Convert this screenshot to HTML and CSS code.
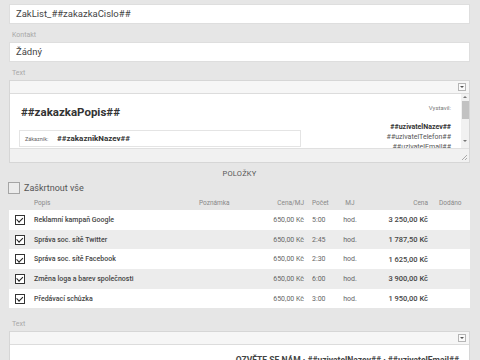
FILE: index.html
```html
<!DOCTYPE html>
<html lang="cs">
<head>
<meta charset="utf-8">
<link rel="stylesheet" href="styles.css">
</head>
<body>
<div class="page">
  <div class="field first">
    <div class="label">Název souboru</div>
    <div class="input">ZakList_##zakazkaCislo##</div>
  </div>
  <div class="field">
    <div class="label">Kontakt</div>
    <div class="input">Žádný</div>
  </div>
  <div class="field">
    <div class="label">Text</div>
    <div class="editor">
      <div class="toolbar"><span class="tbtn"></span></div>
      <div class="econtent">
        <div class="doc">
          <div class="doc-left">
            <div class="doc-title">##zakazkaPopis##</div>
            <div class="custbox"><span class="custlabel">Zákazník:</span><span class="custname">##zakaznikNazev##</span></div>
          </div>
          <div class="doc-right">
            <div class="vyst">Vystavil:</div>
            <div class="uname">##uzivatelNazev##</div>
            <div class="uline">##uzivatelTelefon##</div>
            <div class="uline">##uzivatelEmail##</div>
          </div>
        </div>
        <div class="scrollbar">
          <span class="arr up"></span>
          <span class="thumb"></span>
          <span class="arr down"></span>
        </div>
      </div>
      <div class="statusbar"><span class="grip"></span></div>
    </div>
  </div>

  <div class="section-title">POLOŽKY</div>
  <label class="checkall"><span class="cbox"></span><span>Zaškrtnout vše</span></label>

  <div class="table">
    <div class="row head">
      <div></div><div>Popis</div><div>Poznámka</div><div class="r">Cena/MJ</div><div class="pl">Počet</div><div class="c">MJ</div><div class="r">Cena</div><div class="dl">Dodáno</div>
    </div>
    <div class="row item">
      <div><span class="chk"></span></div><div class="name">Reklamní kampaň Google</div><div></div><div class="r">650,00 Kč</div><div class="pl">5:00</div><div class="c">hod.</div><div class="r sum">3 250,00 Kč</div><div></div>
    </div>
    <div class="row item">
      <div><span class="chk"></span></div><div class="name">Správa soc. sítě Twitter</div><div></div><div class="r">650,00 Kč</div><div class="pl">2:45</div><div class="c">hod.</div><div class="r sum">1 787,50 Kč</div><div></div>
    </div>
    <div class="row item">
      <div><span class="chk"></span></div><div class="name">Správa soc. sítě Facebook</div><div></div><div class="r">650,00 Kč</div><div class="pl">2:30</div><div class="c">hod.</div><div class="r sum">1 625,00 Kč</div><div></div>
    </div>
    <div class="row item">
      <div><span class="chk"></span></div><div class="name">Změna loga a barev společnosti</div><div></div><div class="r">650,00 Kč</div><div class="pl">6:00</div><div class="c">hod.</div><div class="r sum">3 900,00 Kč</div><div></div>
    </div>
    <div class="row item">
      <div><span class="chk"></span></div><div class="name">Předávací schůzka</div><div></div><div class="r">650,00 Kč</div><div class="pl">3:00</div><div class="c">hod.</div><div class="r sum">1 950,00 Kč</div><div></div>
    </div>
  </div>

  <div class="field last">
    <div class="label">Text</div>
    <div class="editor">
      <div class="toolbar"><span class="tbtn"></span></div>
      <div class="econtent2">
        <div class="foot">OZVĚTE SE NÁM · ##uzivatelNazev## · ##uzivatelEmail##</div>
      </div>
    </div>
  </div>
</div>
</body>
</html>
```

FILE: styles.css
```css
* { box-sizing: border-box; }
html, body { margin: 0; padding: 0; }
body {
  background: #e6e6e6;
  font-family: Roboto, "Liberation Sans", Arial, sans-serif;
  color: #444;
  width: 480px;
  height: 360px;
  overflow: hidden;
}
.page {
  padding: 0 10px 0 9px;
  margin-top: -7px;
}
.field { padding-top: 7px; }
.field.first { padding-top: 0; }
.label {
  font-size: 7px;
  line-height: 9px;
  color: #a8a8a8;
  padding-left: 3px;
  margin-bottom: 2px;
}
.input {
  height: 20px;
  background: #fff;
  border: 1px solid #dedede;
  font-size: 9.5px;
  line-height: 18px;
  padding-left: 6px;
  color: #444;
}
.editor {
  border: 1px solid #d6d6d6;
  background: #fff;
}
.toolbar {
  height: 13px;
  background: #f6f6f6;
  border-bottom: 1px solid #dcdcdc;
  display: flex;
  justify-content: flex-end;
  align-items: center;
  padding-right: 3px;
}
.tbtn {
  width: 8px;
  height: 8px;
  border: 1px solid #b5b5b5;
  background: #fafafa;
  display: flex;
  align-items: center;
  justify-content: center;
}
.tbtn::after {
  content: "";
  width: 0; height: 0;
  border-left: 2px solid transparent;
  border-right: 2px solid transparent;
  border-top: 2px solid #555;
}
.econtent {
  height: 54px;
  display: flex;
  overflow: hidden;
}
.doc {
  flex: 1;
  display: flex;
  justify-content: space-between;
  padding: 0 10px 0 9px;
}
.doc-left { padding-top: 11px; }
.doc-title {
  font-size: 11.5px;
  line-height: 15px;
  font-weight: bold;
  color: #333;
  padding-left: 2px;
}
.custbox {
  margin-top: 10px;
  width: 282px;
  height: 17px;
  border: 1px solid #e4e4e4;
  display: flex;
  align-items: center;
  padding-left: 5px;
}
.custlabel { font-size: 5.5px; color: #666; width: 32px; }
.custname { font-size: 8px; font-weight: bold; color: #333; }
.doc-right {
  text-align: right;
  padding-top: 10px;
}
.vyst { font-size: 6px; color: #777; line-height: 8px; margin-bottom: 10px; }
.uname { font-size: 7px; font-weight: bold; color: #333; line-height: 10px; }
.uline { font-size: 7px; color: #555; line-height: 10px; }
.scrollbar {
  width: 8px;
  background: #f1f1f1;
  display: flex;
  flex-direction: column;
  align-items: center;
  padding-top: 2px;
}
.arr { width: 0; height: 0; border-left: 2px solid transparent; border-right: 2px solid transparent; }
.arr.up { border-bottom: 2px solid #777; }
.arr.down { border-top: 2px solid #777; margin-top: auto; margin-bottom: 6px; }
.thumb { width: 7px; height: 18px; background: #c2c2c2; margin-top: 3px; }
.statusbar {
  height: 14px;
  background: #f1f1f1;
  border-top: 1px solid #e0e0e0;
  display: flex;
  justify-content: flex-end;
  align-items: flex-end;
  padding: 0 2px 2px 0;
}
.grip {
  width: 5px; height: 5px;
  background: linear-gradient(135deg, transparent 45%, #aaa 45%, #aaa 55%, transparent 55%, transparent 75%, #aaa 75%, #aaa 85%, transparent 85%);
}
.section-title {
  text-align: center;
  font-size: 7.5px;
  color: #555;
  line-height: 10px;
  margin-top: 6px;
  letter-spacing: 0.2px;
}
.checkall {
  display: flex;
  align-items: center;
  gap: 4px;
  margin: 3px 0 0 -1px;
  font-size: 9px;
  color: #555;
}
.cbox {
  width: 12px; height: 12px;
  border: 1px solid #a5a5a5;
  background: #ececec;
}
.table { margin-top: 1px; }
.row {
  display: grid;
  grid-template-columns: 25px 165px 70px 35px 34px 24px 66px 43px;
  align-items: center;
}
.row.head {
  height: 15px;
  font-size: 6.5px;
  color: #888;
}
.row.item {
  height: 19.7px;
  font-size: 7px;
  color: #666;
  background: #fff;
}
.row.item:nth-child(odd) { background: #ececec; }
.r { text-align: right; }
.c { text-align: center; }
.pl { padding-left: 8px; }
.dl { padding-left: 11px; }
.name { font-size: 7px; font-weight: 500; color: #444; }
.sum { font-weight: 500; color: #444; font-size: 7.5px; }
.chk {
  display: block;
  margin-left: 6px;
  width: 10px; height: 10px;
  border: 1.5px solid #333;
  background: #fff;
  position: relative;
}
.chk::after {
  content: "";
  position: absolute;
  left: 2px; top: 0.5px;
  width: 2.5px; height: 4.5px;
  border-right: 1.5px solid #222;
  border-bottom: 1.5px solid #222;
  transform: rotate(45deg);
}
.field.last { padding-top: 12px; }
.econtent2 {
  height: 40px;
  background: #fff;
  text-align: right;
  padding: 10px 10px 0 0;
}
.foot {
  font-size: 8.5px;
  font-weight: bold;
  color: #444;
}
```
